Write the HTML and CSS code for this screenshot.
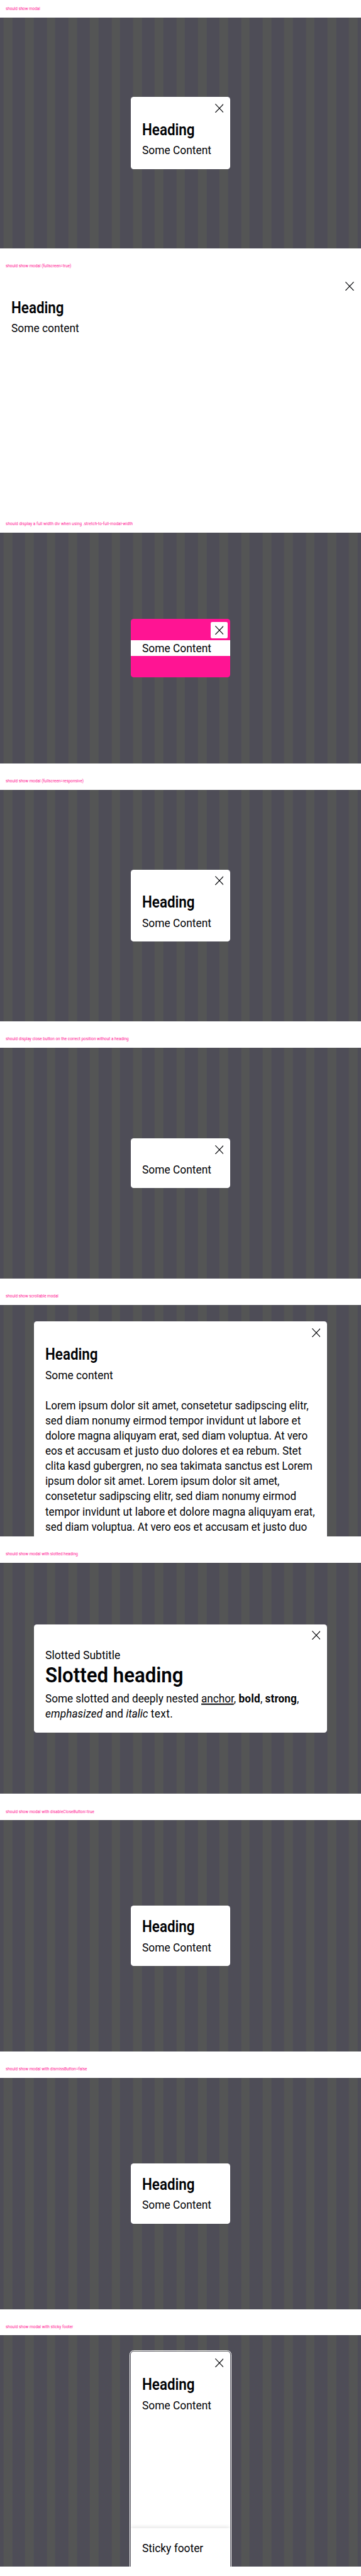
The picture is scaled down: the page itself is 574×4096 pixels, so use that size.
FILE: index.html
```html
<!DOCTYPE html>
<html lang="en">
<head>
<meta charset="utf-8">
<title>Modal</title>
<link rel="stylesheet" href="styles.css">
</head>
<body>
<section class="case">
  <h2 class="case-title"><span class="fit tighter">should show modal</span></h2>
  <div class="stage">
    <div class="modal">
      <button class="close" aria-label="Close"><svg class="icon" viewBox="0 0 24 25"><path d="M.6.6 23.4 24.4M23.4.6.6 24.4"/></svg></button>
      <h3 class="heading"><span class="fit">Heading</span></h3>
      <p class="line"><span class="fit">Some Content</span></p>
    </div>
  </div>
</section>

<section class="case">
  <h2 class="case-title"><span class="fit">should show modal (fullscreen=true)</span></h2>
  <div class="stage">
    <div class="modal fullscreen">
      <button class="close" aria-label="Close"><svg class="icon" viewBox="0 0 24 25"><path d="M.6.6 23.4 24.4M23.4.6.6 24.4"/></svg></button>
      <h3 class="heading"><span class="fit">Heading</span></h3>
      <p class="line"><span class="fit">Some content</span></p>
    </div>
  </div>
</section>

<section class="case">
  <h2 class="case-title"><span class="fit looser">should display a full width div when using .stretch-to-full-modal-width</span></h2>
  <div class="stage">
    <div class="modal stretch">
      <button class="close" aria-label="Close"><svg class="icon" viewBox="0 0 24 25"><path d="M.6.6 23.4 24.4M23.4.6.6 24.4"/></svg></button>
      <div class="full-width"><p class="line"><span class="fit">Some Content</span></p></div>
    </div>
  </div>
</section>

<section class="case">
  <h2 class="case-title"><span class="fit">should show modal (fullscreen=responsive)</span></h2>
  <div class="stage">
    <div class="modal">
      <button class="close" aria-label="Close"><svg class="icon" viewBox="0 0 24 25"><path d="M.6.6 23.4 24.4M23.4.6.6 24.4"/></svg></button>
      <h3 class="heading"><span class="fit">Heading</span></h3>
      <p class="line"><span class="fit">Some Content</span></p>
    </div>
  </div>
</section>

<section class="case">
  <h2 class="case-title"><span class="fit">should display close button on the correct position without a heading</span></h2>
  <div class="stage">
    <div class="modal">
      <button class="close" aria-label="Close"><svg class="icon" viewBox="0 0 24 25"><path d="M.6.6 23.4 24.4M23.4.6.6 24.4"/></svg></button>
      <p class="line"><span class="fit">Some Content</span></p>
    </div>
  </div>
</section>

<section class="case">
  <h2 class="case-title"><span class="fit tight">should show scrollable modal</span></h2>
  <div class="stage scroll">
    <div class="modal wide">
      <button class="close" aria-label="Close"><svg class="icon" viewBox="0 0 24 25"><path d="M.6.6 23.4 24.4M23.4.6.6 24.4"/></svg></button>
      <h3 class="heading"><span class="fit">Heading</span></h3>
      <p class="line"><span class="fit">Some content</span></p>
      <p class="line para"><span class="fit">Lorem ipsum dolor sit amet, consetetur sadipscing elitr,</span><br>
        <span class="fit loose">sed diam nonumy eirmod tempor invidunt ut labore et</span><br>
        <span class="fit tight">dolore magna aliquyam erat, sed diam voluptua. At vero</span><br>
        <span class="fit">eos et accusam et justo duo dolores et ea rebum. Stet</span><br>
        <span class="fit tight">clita kasd gubergren, no sea takimata sanctus est Lorem</span><br>
        <span class="fit tighter">ipsum dolor sit amet. Lorem ipsum dolor sit amet,</span><br>
        <span class="fit">consetetur sadipscing elitr, sed diam nonumy eirmod</span><br>
        <span class="fit loose">tempor invidunt ut labore et dolore magna aliquyam erat,</span><br>
        <span class="fit tight">sed diam voluptua. At vero eos et accusam et justo duo</span></p>
    </div>
  </div>
</section>

<section class="case">
  <h2 class="case-title"><span class="fit">should show modal with slotted heading</span></h2>
  <div class="stage">
    <div class="modal wide">
      <button class="close" aria-label="Close"><svg class="icon" viewBox="0 0 24 25"><path d="M.6.6 23.4 24.4M23.4.6.6 24.4"/></svg></button>
      <p class="line subtitle"><span class="fit">Slotted Subtitle</span></p>
      <h3 class="heading large"><span class="fit">Slotted heading</span></h3>
      <p class="line rich"><span class="fit">Some slotted and deeply nested <a class="anchor">anchor</a>, <b>bold</b>, <strong>strong</strong>,<br><em>emphasized</em> and <i>italic</i> <span class="open">text.</span></span></p>
    </div>
  </div>
</section>

<section class="case">
  <h2 class="case-title"><span class="fit">should show modal with disableCloseButton=true</span></h2>
  <div class="stage">
    <div class="modal compact">
      <h3 class="heading"><span class="fit">Heading</span></h3>
      <p class="line"><span class="fit">Some Content</span></p>
    </div>
  </div>
</section>

<section class="case">
  <h2 class="case-title"><span class="fit">should show modal with dismissButton=false</span></h2>
  <div class="stage">
    <div class="modal compact">
      <h3 class="heading"><span class="fit">Heading</span></h3>
      <p class="line"><span class="fit">Some Content</span></p>
    </div>
  </div>
</section>

<section class="case">
  <h2 class="case-title"><span class="fit loose">should show modal with sticky footer</span></h2>
  <div class="stage scroll">
    <div class="modal focus">
      <button class="close" aria-label="Close"><svg class="icon" viewBox="0 0 24 25"><path d="M.6.6 23.4 24.4M23.4.6.6 24.4"/></svg></button>
      <div class="body">
        <h3 class="heading"><span class="fit">Heading</span></h3>
        <p class="line"><span class="fit">Some Content</span></p>
      </div>
      <div class="footer"><p class="line"><span class="fit">Sticky footer</span></p></div>
    </div>
  </div>
</section>
</body>
</html>
```
FILE: styles.css
```css
html { font-size: 5.744px; overflow-x: hidden; }
* { box-sizing: border-box; margin: 0; padding: 0; }
body { background: #fff; color: #010205; font-family: Roboto, sans-serif; overflow-x: hidden; }

.case { height: 71.3rem; }
.case-title { height: 4.8rem; padding: 1.7rem 1.6rem 0; font-size: 1.2rem; line-height: 1.6rem; font-weight: 400; color: #ff1493; white-space: nowrap; }

.stage {
  height: 64rem;
  display: flex;
  align-items: center;
  justify-content: center;
  overflow: hidden;
  background: repeating-linear-gradient(90deg, #545555 0 2.4rem, #4e4d57 2.4rem 5.976rem);
  background-position: 1rem 0;
}
.stage.scroll { align-items: flex-start; padding-top: 4.5rem; }

.modal { position: relative; flex: none; width: 27.6rem; background: #fff; border-radius: .8rem; padding: 6.4rem 3.2rem 3.2rem; }
.modal.wide { width: 81.2rem; }
.modal.compact { padding-top: 3.2rem; }
.modal.fullscreen { width: 100%; height: 100%; border-radius: 0; }
.modal.stretch { padding: 6rem 0; background: #ff1493; }
.full-width { padding: 0 3.2rem; background: #fff; }
.modal.focus { padding: 0; outline: .2rem solid #fff; outline-offset: .2rem; overflow: hidden; }
.body { height: 48.95rem; padding: 6.4rem 3.2rem 0; }
.footer { height: 14rem; padding: 3.2rem; background: #fff; box-shadow: 0 -.5rem 1rem -.1rem rgba(0, 0, 0, .1); }

.close { position: absolute; top: .8rem; right: .8rem; width: 4.6rem; height: 4.6rem; border: 0; border-radius: .4rem; background: #fff; display: grid; place-items: center; }
.icon { width: 2.4rem; height: 2.5rem; fill: none; stroke: #010205; stroke-width: 2; }

.heading { font-size: 4.35rem; line-height: 5.4rem; font-weight: 600; margin-bottom: .8rem; white-space: nowrap; }
.heading.large { font-size: 5.75rem; line-height: 7.4rem; margin-bottom: .4rem; }
.line { font-size: 3.3rem; line-height: 4.2rem; white-space: nowrap; }
.para { margin-top: 4.2rem; }

/* condensed text */
.fit { display: inline-block; vertical-align: top; transform-origin: 0 0; transform: scaleX(.932); }
.heading .fit { transform: translateY(.07rem) scaleX(.896); }
.large .fit { transform: translateY(.07rem) scaleX(.944); }
.line .fit { transform: translateY(.12rem) scaleX(.917); }
.para .fit { transform: translateY(.12rem) scaleX(.899); }
.subtitle .fit { transform: translateY(.12rem) scaleX(.93); }
.rich .fit { transform: translateY(.12rem) scaleX(.905); }

.tight { letter-spacing: -.0025em; }
.tighter { letter-spacing: -.0045em; }
.loose { letter-spacing: .002em; }
.case-title .tight { letter-spacing: -.005em; }
.case-title .tighter { letter-spacing: -.009em; }
.case-title .loose { letter-spacing: .005em; }
.case-title .looser { letter-spacing: .014em; }

.anchor { text-decoration: underline; text-decoration-thickness: .3rem; text-underline-offset: .3rem; text-decoration-skip-ink: none; }
.rich b { letter-spacing: .014em; }
.rich strong, .rich em { letter-spacing: .008em; }
.rich .open { letter-spacing: .026em; }
```
